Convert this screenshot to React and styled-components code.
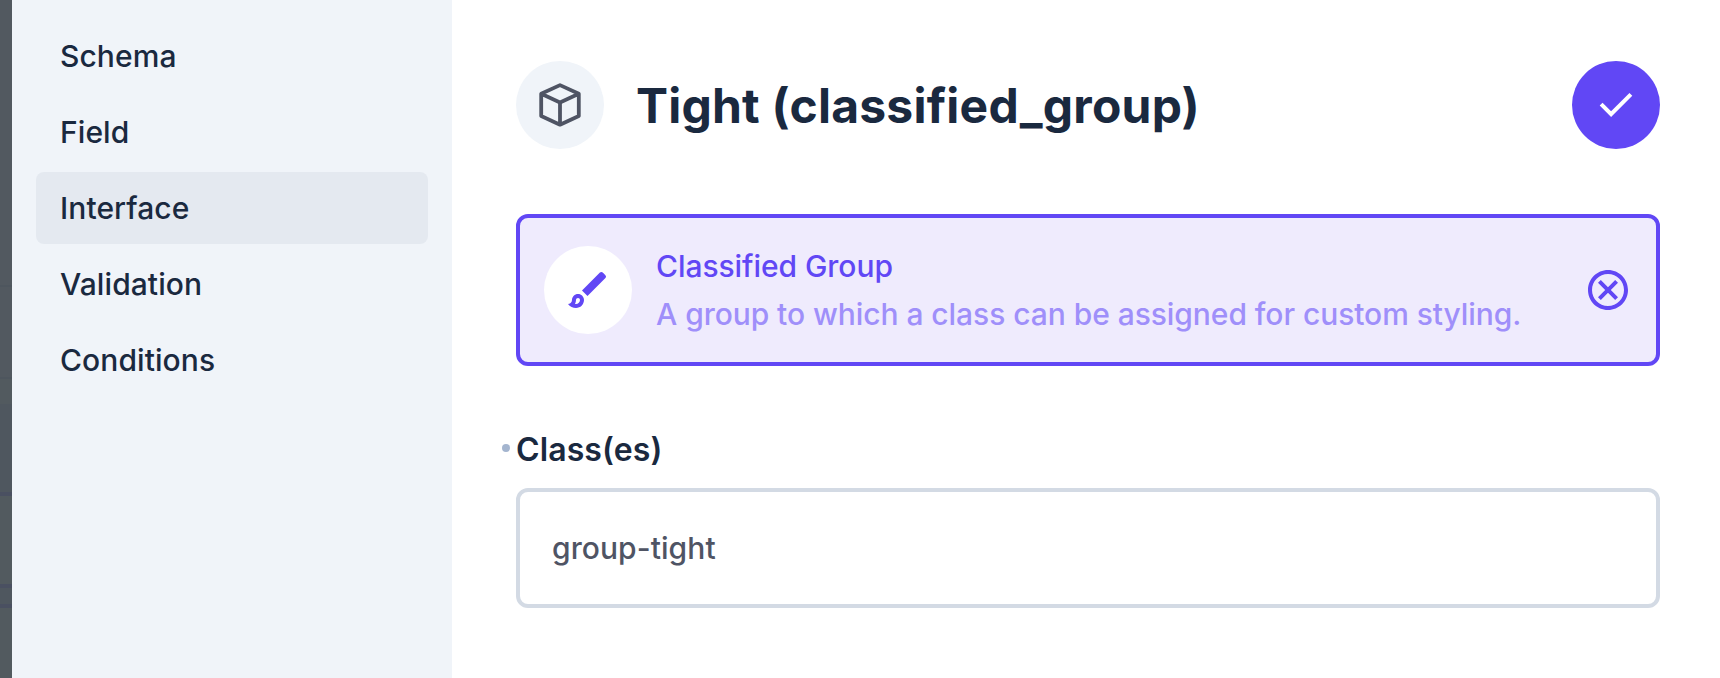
import React from 'react';
import styled, { createGlobalStyle } from 'styled-components';

const GlobalStyle = createGlobalStyle`
  *, *::before, *::after { box-sizing: border-box; }
  body {
    margin: 0;
    background: #fff;
    font-family: Inter, "Liberation Sans", sans-serif;
    font-size: 30px;
    font-weight: 500;
    -webkit-font-smoothing: antialiased;
    overflow: hidden;
  }
`;

const Page = styled.div`
  display: flex;
  width: 1720px;
  height: 678px;
  overflow: hidden;
`;

const Backdrop = styled.div`
  display: flex;
  flex-direction: column;
  flex: 0 0 12px;
`;

const Strip = styled.div`
  flex: 0 0 ${(p) => p.$height}px;
  background: ${(p) => p.$color};
`;

const Sidebar = styled.nav`
  display: flex;
  flex-direction: column;
  gap: 4px;
  flex: 0 0 440px;
  padding: 20px 24px;
  background: #f0f4f9;
`;

const Tab = styled.a`
  display: flex;
  align-items: center;
  height: 72px;
  padding: 0 24px;
  border-radius: 8px;
  letter-spacing: 0.08px;
  color: #1a293f;
  background: ${(p) => (p.$active ? '#e4e9f0' : 'transparent')};
`;

const Main = styled.main`
  display: flex;
  flex-direction: column;
  flex: 1;
  padding: 61px 60px 0 64px;
`;

const Header = styled.header`
  display: flex;
  align-items: center;
`;

const Circle = styled.span`
  display: flex;
  align-items: center;
  justify-content: center;
  flex: 0 0 88px;
  height: 88px;
  padding: 0;
  border: 0;
  border-radius: 50%;
  color: ${(p) => p.$color};
  background: ${(p) => p.$background};
`;

const Title = styled.h1`
  flex: 1;
  margin: 2px 0 0 32px;
  font-size: 48px;
  line-height: 64px;
  font-weight: 700;
  letter-spacing: 0.21px;
  color: #1a293f;
`;

const Notice = styled.section`
  display: flex;
  align-items: center;
  height: 152px;
  margin-top: 65px;
  padding: 0 24px;
  border: 4px solid #6147f5;
  border-radius: 12px;
  background: #efebfd;
  color: #6147f5;
`;

const NoticeText = styled.div`
  flex: 1;
  margin-left: 24px;
  line-height: 48px;
  letter-spacing: -0.06px;
`;

const Description = styled.div`
  color: #9f8ffa;
`;

const FieldLabel = styled.label`
  position: relative;
  margin-top: 60px;
  font-size: 32px;
  line-height: 48px;
  font-weight: 600;
  letter-spacing: 0.1px;
  color: #1a293f;
`;

const EditedDot = styled.span`
  position: absolute;
  top: 18px;
  left: -14px;
  width: 8px;
  height: 8px;
  border-radius: 50%;
  background: #a4b5cf;
`;

const Input = styled.input`
  height: 120px;
  margin-top: 14px;
  padding: 0 32px;
  border: 4px solid #d3dae4;
  border-radius: 12px;
  outline: none;
  background: #fff;
  color: #4f5464;
  font: inherit;
  letter-spacing: 0.08px;
`;

const Icon = ({ d, viewBox = '0 0 24 24' }) => (
  <svg width="48" height="48" viewBox={viewBox} fill="currentColor" aria-hidden="true">
    <path d={d} />
  </svg>
);

const BoxIcon = () => (
  <svg
    width="48"
    height="48"
    viewBox="0 0 24 24"
    fill="none"
    stroke="currentColor"
    strokeWidth="1.9"
    strokeLinejoin="round"
    aria-hidden="true"
  >
    <path d="M12 2.05 21.4 6.4v11.1L12 21.85 2.6 17.5V6.4zM2.6 6.4 12 10.7l9.4-4.3M12 10.7v11.1" />
  </svg>
);

const icons = {
  check: 'M382-240 154-468l57-57 171 171 367-367 57 57-424 424Z',
  brush: 'M7 16c.55 0 1 .45 1 1 0 1.1-.9 2-2 2-.17 0-.33-.02-.5-.05.31-.55.5-1.21.5-1.95 0-.55.45-1 1-1M18.67 3c-.26 0-.51.1-.71.29L9 12.25 11.75 15l8.96-8.96a.996.996 0 0 0 0-1.41l-1.34-1.34c-.2-.2-.45-.29-.7-.29zM7 14c-1.66 0-3 1.34-3 3 0 1.31-1.16 2-2 2 .92 1.22 2.49 2 4 2 2.21 0 4-1.79 4-4 0-1.66-1.34-3-3-3z',
  cancel: 'M12 2C6.47 2 2 6.47 2 12s4.47 10 10 10 10-4.47 10-10S17.53 2 12 2zm0 18c-4.41 0-8-3.59-8-8s3.59-8 8-8 8 3.59 8 8-3.59 8-8 8zm3.59-13L12 10.59 8.41 7 7 8.41 10.59 12 7 15.59 8.41 17 12 13.41 15.59 17 17 15.59 13.41 12 17 8.41z',
};

const tabs = ['Schema', 'Field', 'Interface', 'Validation', 'Conditions'];

const strips = [
  [285, '#525960'],
  [2, '#4e565e'],
  [90, '#525960'],
  [2, '#4e565e'],
  [25, '#525a5f'],
  [88, '#4f575f'],
  [4, '#4a5061'],
  [88, '#525a5f'],
  [4, '#4a5061'],
  [16, '#4f575f'],
  [4, '#4a5061'],
  [70, '#525a5f'],
];

export default function App() {
  return (
    <>
      <GlobalStyle />
      <Page>
        <Backdrop>
          {strips.map(([height, color], i) => (
            <Strip key={i} $height={height} $color={color} />
          ))}
        </Backdrop>
        <Sidebar>
          {tabs.map((name) => (
            <Tab key={name} $active={name === 'Interface'}>{name}</Tab>
          ))}
        </Sidebar>
        <Main>
          <Header>
            <Circle $color="#4f5464" $background="#f0f4f9"><BoxIcon /></Circle>
            <Title>Tight (classified_group)</Title>
            <Circle as="button" aria-label="Save" $color="#fff" $background="#6147f5">
              <Icon d={icons.check} viewBox="0 -960 960 960" />
            </Circle>
          </Header>
          <Notice>
            <Circle $color="#6147f5" $background="#fff"><Icon d={icons.brush} /></Circle>
            <NoticeText>
              <div>Classified Group</div>
              <Description>A group to which a class can be assigned for custom styling.</Description>
            </NoticeText>
            <Icon d={icons.cancel} />
          </Notice>
          <FieldLabel htmlFor="classes"><EditedDot />Class(es)</FieldLabel>
          <Input id="classes" defaultValue="group-tight" />
        </Main>
      </Page>
    </>
  );
}
